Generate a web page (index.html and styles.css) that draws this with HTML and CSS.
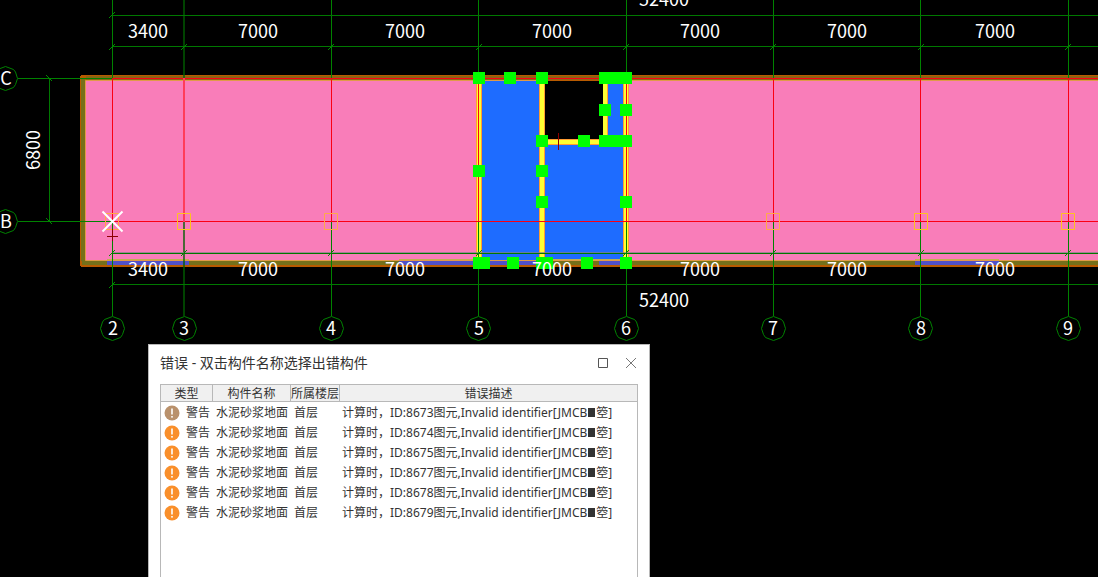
FILE: index.html
```
<!DOCTYPE html>
<html lang="zh-CN">
<head>
<meta charset="utf-8">
<title>错误 - 双击构件名称选择出错构件</title>
<link rel="stylesheet" href="styles.css">
</head>
<body>
<main class="workspace">
<svg class="plan" viewBox="0 0 1098 577" preserveAspectRatio="xMinYMin slice" aria-label="平面图">
  <defs>
    <polygon id="bubble" class="bubble" points="0.500,-11.500 8.500,-8.500 10.500,-6 12.500,0.500 10.500,6.500 8.500,9.500 0.500,12.500 -7.500,9.500 -9.500,6.500 -11.500,0.500 -9.500,-6 -7.500,-8.500"/>
    <path id="tick" class="tick" d="M-3 3L3-3"/>
    <rect id="grip" class="grip" x="-6" y="-6" width="12" height="12"/>
    <path id="column" d="M-6.500-7.500H6.500V8.500H-6.500Z"/>
  </defs>

  <!-- floor areas -->
  <rect class="room" x="85" y="80" width="1020" height="182"/>
  <rect class="picked" x="481" y="80" width="146" height="182"/>
  <rect class="void" x="544" y="80" width="60" height="60"/>

  <!-- outer walls -->
  <rect class="wall-edge" x="81" y="75" width="1025" height="6"/>
  <rect class="wall-top" x="82" y="76" width="1025" height="4"/>
  <rect class="wall-edge" x="80" y="76" width="6" height="190"/>
  <rect class="wall" x="81" y="79" width="4" height="186"/>
  <rect class="wall-edge" x="81" y="261" width="1025" height="6"/>
  <rect class="wall" x="82" y="261" width="1025" height="4"/>
  <path class="wall-light" d="M544 80.500H85.500V260.500H1100M604 80.500H1100"/>
  <g class="window">
    <rect x="107" y="261" width="82" height="4"/>
    <rect x="399" y="261" width="80" height="4"/>
    <rect x="479" y="261" width="65" height="4"/>
    <rect x="599" y="261" width="28" height="4"/>
    <rect x="915" y="261" width="84" height="4"/>
  </g>
  <path class="window-top" d="M107 259.500H189M399 259.500H479M544 259.500H624M915 259.500H999"/>

  <!-- partition walls -->
  <g class="partition-edge">
    <rect x="476" y="81" width="6" height="180"/>
    <rect x="539" y="81" width="6" height="180"/>
    <rect x="603" y="81" width="5" height="60"/>
    <rect x="544" y="139" width="62" height="6"/>
    <rect x="623" y="81" width="6" height="180"/>
  </g>
  <g class="partition">
    <rect x="477" y="81" width="4" height="180"/>
    <rect x="540" y="81" width="4" height="180"/>
    <rect x="603" y="81" width="4" height="60"/>
    <rect x="544" y="140" width="62" height="4"/>
    <rect x="624" y="81" width="4" height="180"/>
  </g>

  <!-- axes -->
  <path class="axis" d="M112.500 0V78M112.500 222V316M331.500 0V78M331.500 222V316M773.500 0V78M773.500 222V316M18 78.500H112M18 221.500H112"/>
  <path class="axis" d="M478.500 0V78M478.500 222V316M626.500 0V78M626.500 222V316M920.500 0V78M920.500 222V316M1068.500 0V78M1068.500 222V316"/>
  <path class="axis-soft" d="M184 0V78M184 222V316"/>
  <path class="axis-red" d="M112.500 78V222M331.500 78V222M478.500 78V222M626.500 78V222M773.500 78V222M920.500 78V222M1068.500 78V222M112 78.500H1098M112 221.500H1098"/>
  <path class="axis-red-soft" d="M184 78V222"/>

  <!-- dimension lines -->
  <path class="dim-shade" d="M112 252.500H1098"/>
  <path class="dim" d="M112 15.500H1098M112 46.500H1098M112 253.500H1098M112 284.500H1098M49.500 78V222"/>
  <g>
    <use href="#tick" x="112" y="15"/><use href="#tick" x="112" y="47"/><use href="#tick" x="184" y="47"/><use href="#tick" x="331" y="47"/><use href="#tick" x="479" y="47"/><use href="#tick" x="626" y="47"/><use href="#tick" x="773" y="47"/><use href="#tick" x="921" y="47"/><use href="#tick" x="1068" y="47"/>
    <use href="#tick" x="112" y="253"/><use href="#tick" x="184" y="253"/><use href="#tick" x="331" y="253"/><use href="#tick" x="479" y="253"/><use href="#tick" x="626" y="253"/><use href="#tick" x="773" y="253"/><use href="#tick" x="921" y="253"/><use href="#tick" x="1068" y="253"/><use href="#tick" x="112" y="285"/>
    <path class="tick" d="M46 75L52 81M46 218L52 224"/>
  </g>

  <!-- columns and markers -->
  <g class="column"><use href="#column" x="112" y="221"/><use href="#column" x="331" y="221"/><use href="#column" x="773" y="221"/></g>
  <g class="column column-bright"><use href="#column" x="184" y="221"/><use href="#column" x="921" y="221"/><use href="#column" x="1068" y="221"/></g>
  <path class="mark" d="M107 236.500H118M112.500 229V241M558.500 133V150"/>
  <path class="cross" d="M102.500 211.500L122.500 231.500M122.500 211.500L102.500 231.500"/>

  <!-- selection grips -->
  <g>
    <use href="#grip" x="479" y="78"/><use href="#grip" x="510" y="78"/><use href="#grip" x="542" y="78"/><use href="#grip" x="605" y="78"/><use href="#grip" x="616" y="78"/><use href="#grip" x="626" y="78"/>
    <use href="#grip" x="605" y="110"/><use href="#grip" x="626" y="110"/>
    <use href="#grip" x="542" y="141"/><use href="#grip" x="584" y="141"/><use href="#grip" x="605" y="141"/><use href="#grip" x="616" y="141"/><use href="#grip" x="626" y="141"/>
    <use href="#grip" x="479" y="171"/><use href="#grip" x="542" y="171"/><use href="#grip" x="542" y="202"/><use href="#grip" x="626" y="202"/>
    <use href="#grip" x="479" y="263"/><use href="#grip" x="484" y="263"/><use href="#grip" x="513" y="263"/><use href="#grip" x="542" y="263"/><use href="#grip" x="547" y="263"/><use href="#grip" x="587" y="263"/><use href="#grip" x="626" y="263"/>
  </g>

  <!-- axis bubbles -->
  <use href="#bubble" x="5" y="78"/><use href="#bubble" x="5" y="221"/>
  <use href="#bubble" x="112" y="328"/><use href="#bubble" x="184" y="328"/><use href="#bubble" x="331" y="328"/><use href="#bubble" x="478" y="328"/><use href="#bubble" x="626" y="328"/><use href="#bubble" x="773" y="328"/><use href="#bubble" x="920" y="328"/><use href="#bubble" x="1068" y="328"/>

  <g class="label">
    <text x="6" y="85">C</text><text x="6" y="228">B</text>
    <text x="113" y="335">2</text><text x="184" y="335">3</text><text x="331" y="335">4</text><text x="479" y="335">5</text><text x="626" y="335">6</text><text x="773" y="335">7</text><text x="921" y="335">8</text><text x="1068" y="335">9</text>
    <text x="664" y="6">52400</text><text x="664" y="307">52400</text>
    <text x="148" y="38">3400</text><text x="258" y="38">7000</text><text x="405" y="38">7000</text><text x="552" y="38">7000</text><text x="700" y="38">7000</text><text x="847" y="38">7000</text><text x="995" y="38">7000</text>
    <text x="148" y="276">3400</text><text x="258" y="276">7000</text><text x="405" y="276">7000</text><text x="552" y="276">7000</text><text x="700" y="276">7000</text><text x="847" y="276">7000</text><text x="995" y="276">7000</text>
    <text transform="translate(40 150) rotate(-90)">6800</text>
  </g>
</svg>

<section class="dialog" role="dialog" aria-labelledby="dialog-title">
  <header class="titlebar">
    <h1 class="title" id="dialog-title">错误 - 双击构件名称选择出错构件</h1>
    <button class="tool" type="button" aria-label="最大化"><svg width="12" height="12"><path d="M1.500 1.500H10.500V10.500H1.500Z"/></svg></button>
    <button class="tool tool-close" type="button" aria-label="关闭"><svg width="12" height="12"><path d="M1 1L11 11M11 1L1 11"/></svg></button>
  </header>
  <div class="list">
    <svg class="symbols" aria-hidden="true"><symbol id="warn" viewBox="0 0 16 16"><circle cx="8" cy="8" r="7.500"/><path d="M7.200 3.500H8.800V9.500H7.200Z" fill="#fff"/><rect x="7.200" y="11" width="1.600" height="1.600" fill="#fff"/></symbol></svg>
    <table class="errors">
      <colgroup><col class="col-type"><col class="col-name"><col class="col-floor"><col></colgroup>
      <thead><tr><th>类型</th><th>构件名称</th><th>所属楼层</th><th>错误描述</th></tr></thead>
      <tbody>
        <tr><td><span class="kind"><svg class="warn warn-read"><use href="#warn"/></svg>警告</span></td><td>水泥砂浆地面</td><td>首层</td><td>计算时，ID:8673图元,Invalid identifier[JMCB<span class="block"></span>箜]</td></tr>
        <tr><td><span class="kind"><svg class="warn"><use href="#warn"/></svg>警告</span></td><td>水泥砂浆地面</td><td>首层</td><td>计算时，ID:8674图元,Invalid identifier[JMCB<span class="block"></span>箜]</td></tr>
        <tr><td><span class="kind"><svg class="warn"><use href="#warn"/></svg>警告</span></td><td>水泥砂浆地面</td><td>首层</td><td>计算时，ID:8675图元,Invalid identifier[JMCB<span class="block"></span>箜]</td></tr>
        <tr><td><span class="kind"><svg class="warn"><use href="#warn"/></svg>警告</span></td><td>水泥砂浆地面</td><td>首层</td><td>计算时，ID:8677图元,Invalid identifier[JMCB<span class="block"></span>箜]</td></tr>
        <tr><td><span class="kind"><svg class="warn"><use href="#warn"/></svg>警告</span></td><td>水泥砂浆地面</td><td>首层</td><td>计算时，ID:8678图元,Invalid identifier[JMCB<span class="block"></span>箜]</td></tr>
        <tr><td><span class="kind"><svg class="warn"><use href="#warn"/></svg>警告</span></td><td>水泥砂浆地面</td><td>首层</td><td>计算时，ID:8679图元,Invalid identifier[JMCB<span class="block"></span>箜]</td></tr>
      </tbody>
    </table>
  </div>
</section>
</main>
</body>
</html>
```
FILE: styles.css
```
* { box-sizing: border-box; }
body { margin: 0; background: #000; font-family: "Noto Sans", "Noto Sans CJK SC", sans-serif; }
.workspace { position: relative; height: 100vh; overflow: hidden; }

.plan { display: block; width: 100%; height: 100%; }
.room { fill: #f97db9; }
.picked { fill: #1e6cff; }
.void { fill: #000; }
.wall { fill: #75701a; }
.wall-top { fill: #8a6414; }
.wall-edge { fill: #b85a00; }
.wall-light { fill: none; stroke: #e09a48; }
.window { fill: #5050c8; }
.window-top { stroke: #c0b050; }
.partition { fill: #ffff32; }
.partition-edge { fill: #ff9c32; }
.axis { fill: none; stroke: #008200; }
.axis-soft { stroke: #006000; stroke-width: 2; stroke-opacity: .7; }
.axis-red { fill: none; stroke: #fa0014; }
.axis-red-soft { stroke: #ff3c5a; stroke-width: 2; }
.dim { fill: none; stroke: #007800; }
.dim-shade { stroke: #808080; stroke-opacity: .7; }
.tick { fill: none; stroke: #008c00; }
.column { fill: none; stroke: #ffaa46; }
.column-bright { stroke: #ffc31e; }
.mark { fill: none; stroke: #8c0000; }
.cross { fill: none; stroke: #fff; stroke-width: 2; }
.grip { fill: #0f0; }
.bubble { fill: none; stroke: #008200; }
.label { fill: #fff; font: 18px "Noto Sans CJK SC", sans-serif; text-anchor: middle; }

.dialog {
  position: absolute;
  top: 344px;
  bottom: 0;
  left: 148px;
  width: 502px;
  display: flex;
  flex-direction: column;
  padding: 0 11px;
  background: #fff;
  border: 1px solid #b8b8b8;
  border-bottom: 0;
  color: #333;
}
.titlebar { display: flex; align-items: center; gap: 12px; height: 39px; padding-bottom: 3px; }
.title { flex: 1; margin: 0; font: 14px/20px "Noto Sans", "Noto Sans CJK SC", sans-serif; }
.tool { display: flex; align-items: center; justify-content: center; width: 16px; height: 20px; padding: 0; border: 0; background: none; }
.tool path { fill: none; stroke: #555; }
.tool-close { margin-right: -1px; }
.tool-close path { stroke: #777; }

.list { flex: 1; border: 1px solid #b8b8b8; border-bottom: 0; }
.symbols { display: none; }
.errors { width: 100%; table-layout: fixed; border-collapse: separate; border-spacing: 0; font-size: 12px; line-height: 16px; white-space: nowrap; }
.col-type { width: 52px; }
.col-name { width: 78px; }
.col-floor { width: 49px; }
.errors th { height: 17px; padding: 1px 0 0; background: #f0f0f0; border-right: 1px solid #b8b8b8; border-bottom: 1px solid #b8b8b8; font-weight: 400; line-height: 15px; text-align: center; }
.errors th:last-child { border-right: 0; }
.errors td { height: 20px; padding: 1px 2px 0 3px; }
.errors td:last-child { padding-left: 2px; }
.kind { display: flex; align-items: center; gap: 6px; }
.warn { width: 16px; height: 16px; fill: #f98f2b; }
.warn-read { fill: #b9916c; }
.block { display: inline-block; width: 7px; height: 9px; margin: 0 1px; background: #333; }
```
